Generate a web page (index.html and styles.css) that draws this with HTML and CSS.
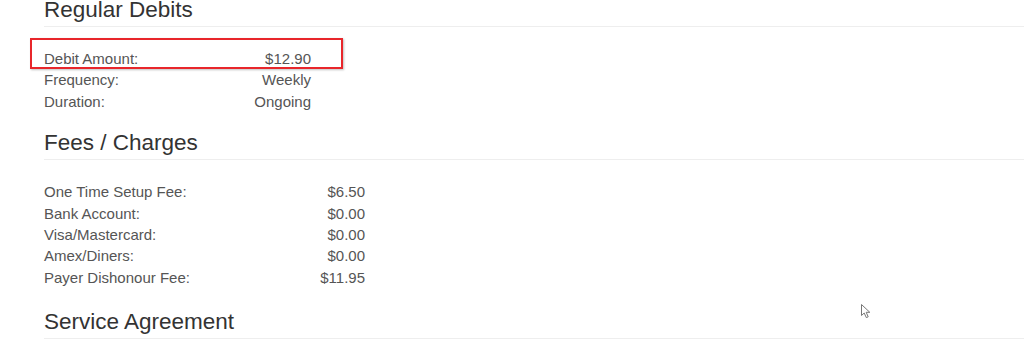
FILE: index.html
```html
<!DOCTYPE html>
<html lang="en">
<head>
<meta charset="utf-8">
<title>Payment Summary</title>
<link rel="stylesheet" href="styles.css">
</head>
<body>
<main class="summary">
  <section class="block block-debits">
    <h3 class="block-title">Regular Debits</h3>
    <div class="details details-debits">
      <div class="row row-marked">
        <span class="label">Debit Amount:</span><span class="value">$12.90</span>
        <span class="mark"></span>
      </div>
      <div class="row"><span class="label">Frequency:</span><span class="value">Weekly</span></div>
      <div class="row"><span class="label">Duration:</span><span class="value">Ongoing</span></div>
    </div>
  </section>

  <section class="block block-fees">
    <h3 class="block-title">Fees / Charges</h3>
    <div class="details details-fees">
      <div class="row"><span class="label">One Time Setup Fee:</span><span class="value">$6.50</span></div>
      <div class="row"><span class="label">Bank Account:</span><span class="value">$0.00</span></div>
      <div class="row"><span class="label">Visa/Mastercard:</span><span class="value">$0.00</span></div>
      <div class="row"><span class="label">Amex/Diners:</span><span class="value">$0.00</span></div>
      <div class="row"><span class="label">Payer Dishonour Fee:</span><span class="value">$11.95</span></div>
    </div>
  </section>

  <section class="block">
    <h3 class="block-title">Service Agreement</h3>
  </section>
</main>

<svg class="pointer" width="12" height="16" viewBox="0 0 12 16" aria-hidden="true">
  <path d="M1.5 1.5 L1.5 12.5 L4.2 10 L6.3 14.6 L8.2 13.8 L6.2 9.3 L9.8 9.3 Z" fill="#fff" stroke="#777" stroke-width="1" stroke-linejoin="round"/>
</svg>
</body>
</html>
```

FILE: styles.css
```css
html, body {
  margin: 0;
  padding: 0;
  background: #fff;
}

body {
  font-family: "Liberation Sans", Arial, sans-serif;
  color: #555;
  overflow: hidden;
}

.summary {
  padding-left: 44px;
  margin-top: -2px;
}

.block-debits {
  margin-bottom: 19px;
}

.block-fees {
  margin-bottom: 21.5px;
}

.block-title {
  margin: 0;
  padding-bottom: 4px;
  border-bottom: 1px solid #eee;
  font-size: 22.5px;
  line-height: 24px;
  font-weight: normal;
  color: #333;
}

.details {
  margin-top: 21px;
  display: flex;
  flex-direction: column;
  font-size: 15px;
  line-height: 21.4px;
}

.details-debits {
  width: 267px;
}

.details-fees {
  width: 321px;
}

.row {
  display: flex;
  justify-content: space-between;
  position: relative;
}

/* red highlight drawn around the debit amount row */
.mark {
  position: absolute;
  left: -14px;
  right: -32px;
  top: -10px;
  bottom: 0;
  border: 2px solid #e8262b;
  box-shadow: 1px 1px 2px rgba(0, 0, 0, 0.25);
  pointer-events: none;
}

.pointer {
  position: absolute;
  left: 860px;
  top: 303px;
}
```
